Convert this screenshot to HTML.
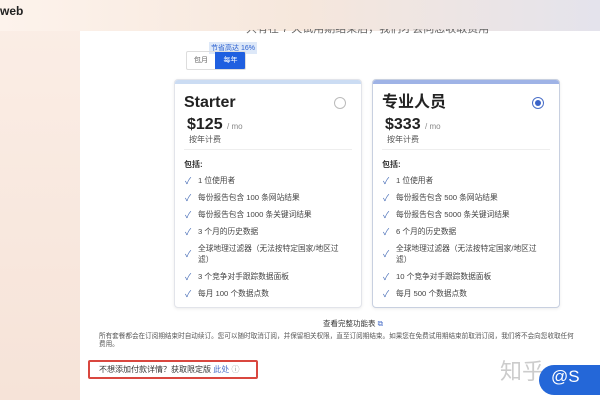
<!DOCTYPE html><html><head><meta charset="utf-8"><style>
*{margin:0;padding:0;box-sizing:border-box}
body{width:600px;height:400px;overflow:hidden;position:relative;background:#fff;font-family:"Liberation Sans","Noto Sans CJK SC",sans-serif;color:#333}
.side{position:absolute;left:0;top:0;width:80px;height:400px;background:linear-gradient(180deg,#fbeee6,#f6e3d8)}
.top{position:absolute;left:0;top:0;width:600px;height:31px;background:linear-gradient(90deg,#fdf3ec,#f6e7dc 50%,#e4e3ec)}
.logo{position:absolute;left:0;top:4px;font-weight:bold;font-size:12px;color:#222}
.sub{position:absolute;left:246px;top:29px;font-size:11px;color:#666;height:6px;overflow:hidden;line-height:11px}
.sub span{position:relative;top:-5px}
.badge{position:absolute;left:209px;top:42px;font-size:7px;color:#2a5fd0;background:#dde8f8;padding:1px 2px}
.tog{position:absolute;left:186px;top:51px;width:60px;height:19px;border:1px solid #ddd;border-radius:2px;font-size:7px;overflow:hidden}
.tog span{position:absolute;top:0;height:17px;line-height:17px;text-align:center}
.card{position:absolute;top:79px;width:188px;height:229px;border:1px solid #e2e4ea;border-radius:4px;background:#fff;box-shadow:0 1px 3px rgba(0,0,0,.08);overflow:hidden}
.card .bar{height:4px}
.card h2{position:absolute;left:9px;top:13px;font-size:16px;line-height:20px;height:20px;font-weight:bold;color:#222}
.radio{position:absolute;left:159px;top:17px;width:12px;height:12px;border:1px solid #bbb;border-radius:50%}
.price{position:absolute;left:12px;top:36px;font-size:16px;font-weight:bold;color:#222;line-height:18px}
.price small{font-size:8px;font-weight:normal;color:#888}
.yr{position:absolute;left:14px;top:54px;font-size:8px;color:#555}
.hr{position:absolute;left:9px;right:9px;top:69px;border-top:1px solid #eee}
.inc{position:absolute;left:9px;top:79px;font-size:8px;font-weight:bold;color:#333}
ul{position:absolute;left:9px;top:95px;list-style:none;font-size:7.7px;color:#444;width:175px}
li{position:relative;padding-left:14px;line-height:11px;margin-bottom:6px;white-space:nowrap}
li:before{content:"✓";position:absolute;left:1px;top:1px;color:#4a6fb8;font-size:9px}
li.two:before{top:6px}
.full{position:absolute;left:323px;top:318px;font-size:7.5px;color:#333}
.fine{position:absolute;left:99px;top:333px;width:520px;font-size:6.6px;line-height:8px;color:#555}
.red{position:absolute;left:88px;top:360px;width:170px;height:19px;border:2px solid #d9473f;border-radius:2px;font-size:8px;line-height:15px;padding-left:9px;color:#333}
.zh{position:absolute;left:500px;top:354px;font-size:22px;color:#ccc;font-family:"Noto Sans CJK SC",sans-serif}
.pill{position:absolute;left:539px;top:365px;width:80px;height:30px;border-radius:15px;background:#2467d8;color:#fff;font-size:17px;padding-left:12px;line-height:24px}
</style></head><body>
<div class="side"></div><div class="top"></div>
<div class="logo">web</div>
<div class="sub"><span>只有在 7 天试用期结束后，我们才会向您收取费用</span></div>
<div class="badge">节省高达 16%</div>
<div class="tog"><span style="left:0;width:28px;color:#666">包月</span><span style="left:28px;width:31px;background:#1f5fe0;color:#fff">每年</span></div>
<div class="card" style="left:174px"><div class="bar" style="background:#cbdcf3"></div>
<h2>Starter</h2><div class="radio"></div>
<div class="price">$125 <small>/ mo</small></div><div class="yr">按年计费</div><div class="hr"></div><div class="inc">包括:</div>
<ul><li>1 位使用者</li><li>每份报告包含 100 条网站结果</li><li>每份报告包含 1000 条关键词结果</li><li>3 个月的历史数据</li><li class="two">全球地理过滤器（无法按特定国家/地区过<br>滤）</li><li>3 个竞争对手跟踪数据面板</li><li>每月 100 个数据点数</li></ul></div>
<div class="card" style="left:372px;border-color:#c8d0e0"><div class="bar" style="background:#9fb3e6"></div>
<h2>专业人员</h2><div class="radio" style="border-color:#4a6fc8"><div style="width:6px;height:6px;background:#3a64c8;border-radius:50%;margin:2px"></div></div>
<div class="price">$333 <small>/ mo</small></div><div class="yr">按年计费</div><div class="hr"></div><div class="inc">包括:</div>
<ul><li>1 位使用者</li><li>每份报告包含 500 条网站结果</li><li>每份报告包含 5000 条关键词结果</li><li>6 个月的历史数据</li><li class="two">全球地理过滤器（无法按特定国家/地区过<br>滤）</li><li>10 个竞争对手跟踪数据面板</li><li>每月 500 个数据点数</li></ul></div>
<div class="full">查看完整功能表 <span style="color:#4a6fc8">⧉</span></div>
<div class="fine">所有套餐都会在订阅期结束时自动续订。您可以随时取消订阅，并保留相关权限，直至订阅期结束。如果您在免费试用期结束前取消订阅，我们将不会向您收取任何<br>费用。</div>
<div class="red">不想添加付款详情？获取限定版 <span style="color:#4a6fc8">此处</span> <span style="color:#999">ⓘ</span></div>
<div class="zh">知乎</div><div class="pill">@S</div>
</body></html>
